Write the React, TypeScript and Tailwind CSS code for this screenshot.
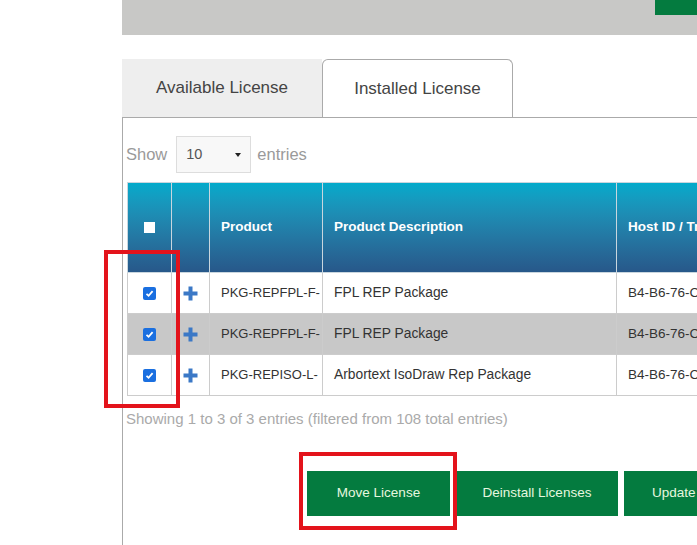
import React from "react";

type Row = {
  product: string;
  description: string;
  host: string;
  shaded?: boolean;
};

const ROWS: Row[] = [
  { product: "PKG-REPFPL-F-", description: "FPL REP Package", host: "B4-B6-76-C8-9A-11" },
  { product: "PKG-REPFPL-F-", description: "FPL REP Package", host: "B4-B6-76-C8-9A-11", shaded: true },
  { product: "PKG-REPISO-L-", description: "Arbortext IsoDraw Rep Package", host: "B4-B6-76-C8-9A-11" },
];

function PlusIcon() {
  return (
    <svg width="15" height="15" viewBox="0 0 15 15" className="block">
      <rect x="5.5" y="0.5" width="4" height="14" fill="#3b78c6" />
      <rect x="0.5" y="5.5" width="14" height="4" fill="#3b78c6" />
    </svg>
  );
}

function CheckedBox() {
  return (
    <span className="flex h-[13px] w-[13px] items-center justify-center rounded-[2px] bg-[#1a6fe0]">
      <svg width="9" height="9" viewBox="0 0 9 9">
        <path d="M1.5 4.8 L3.6 6.8 L7.6 2.2" fill="none" stroke="white" strokeWidth="1.8" />
      </svg>
    </span>
  );
}

export default function App() {
  return (
    <div
      className="relative h-[545px] w-[697px] overflow-hidden bg-white text-[#333]"
      style={{ fontFamily: '"Liberation Sans", Arial, sans-serif' }}
    >
      <div className="ml-[122px] flex h-[545px] flex-col">
        {/* top bar */}
        <div className="flex h-[35px] shrink-0 justify-end bg-[#c8c8c6]">
          <div className="h-[15px] w-[42px] bg-[#047b3f]" />
        </div>

        {/* tabs */}
        <div className="mt-[24px] flex h-[58px] shrink-0">
          <div className="flex w-[200px] items-center justify-center bg-[#eeeeee] text-[17px] text-[#444]">
            Available License
          </div>
          <div className="flex w-[191px] items-center justify-center rounded-t-[6px] border border-b-0 border-[#aaa] bg-white text-[17px] text-[#444]">
            Installed License
          </div>
        </div>

        {/* panel */}
        <div className="flex-1 border-l border-t border-[#aaa]">
          <div className="mt-[18px] flex items-center pl-[3px] text-[16.5px] text-[#9a9a9a]">
            <span>Show</span>
            <div className="ml-[9px] flex h-[37px] w-[75px] items-center justify-between border border-[#ddd] bg-[#f8f8f8] pl-[9px] pr-[9px] text-[14.5px] text-[#555]">
              <span>10</span>
              <span className="h-0 w-0 border-x-[3px] border-t-[4px] border-x-transparent border-t-[#222]" />
            </div>
            <span className="ml-[6px]">entries</span>
          </div>

          <table className="ml-[4px] mt-[9px] w-[800px] table-fixed border-collapse">
            <colgroup>
              <col className="w-[44px]" />
              <col className="w-[38px]" />
              <col className="w-[113px]" />
              <col className="w-[294px]" />
              <col className="w-[311px]" />
            </colgroup>
            <thead>
              <tr className="h-[90px] bg-gradient-to-b from-[#02aacb] to-[#275789] text-left text-[13.5px] font-bold text-white">
                <th className="border border-[#c9d6de] text-center align-middle">
                  <span className="inline-block h-[11px] w-[11px] bg-white align-middle" />
                </th>
                <th className="border border-[#c9d6de]" />
                <th className="border border-[#c9d6de] pl-[11px]">Product</th>
                <th className="border border-[#c9d6de] pl-[11px]">Product Description</th>
                <th className="whitespace-nowrap border border-[#c9d6de] pl-[11px]">Host ID / Transaction ID</th>
              </tr>
            </thead>
            <tbody>
              {ROWS.map((r, i) => (
                <tr
                  key={i}
                  className={`h-[41px] ${r.shaded ? "bg-[#c8c8c8]" : "bg-white"}`}
                >
                  <td className="border border-[#ccc]">
                    <div className="flex justify-center">
                      <CheckedBox />
                    </div>
                  </td>
                  <td className="border border-[#ccc]">
                    <div className="flex justify-center">
                      <PlusIcon />
                    </div>
                  </td>
                  <td className="whitespace-nowrap border border-[#ccc] pl-[11px] text-[13px]">{r.product}</td>
                  <td className="whitespace-nowrap border border-[#ccc] pl-[11px] text-[13.8px]">{r.description}</td>
                  <td className="whitespace-nowrap border border-[#ccc] pl-[11px] text-[13.5px]">{r.host}</td>
                </tr>
              ))}
            </tbody>
          </table>

          <div className="mt-[12px] pl-[3px] text-[15px] text-[#aaa]">
            Showing 1 to 3 of 3 entries (filtered from 108 total entries)
          </div>

          <div className="ml-[184px] mt-[40px] flex gap-[6px] text-[13.5px] text-[#e6f7df]">
            <button className="h-[45px] w-[143px] shrink-0 bg-[#047b3f]">Move License</button>
            <button className="h-[45px] w-[162px] shrink-0 bg-[#047b3f]">Deinstall Licenses</button>
            <button className="h-[45px] w-[150px] shrink-0 bg-[#047b3f]">Update License</button>
          </div>
        </div>
      </div>

      {/* annotation boxes */}
      <div className="absolute left-[104px] top-[250px] h-[158px] w-[76px] border-4 border-[#e3131b]" />
      <div className="absolute left-[299px] top-[452px] h-[78px] w-[158px] border-4 border-[#e3131b]" />
    </div>
  );
}
